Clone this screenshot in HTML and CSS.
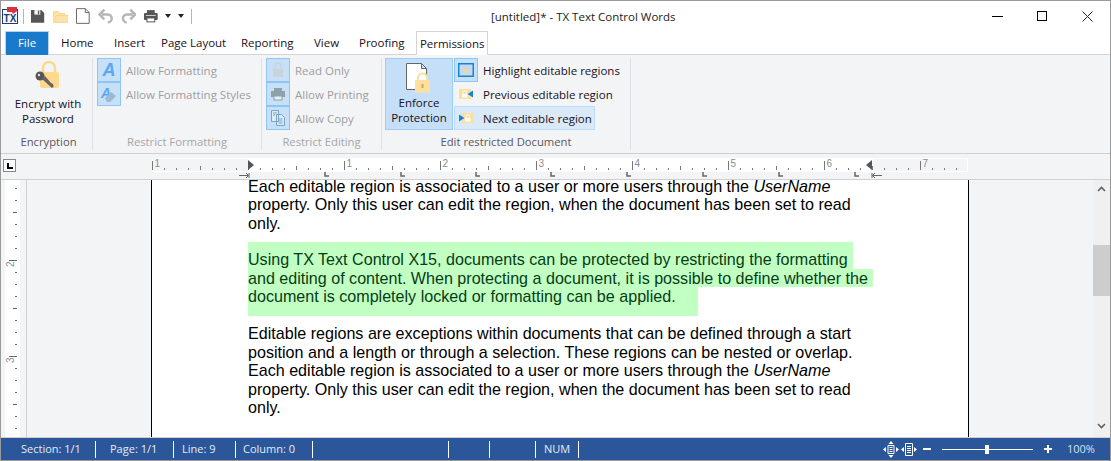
FILE: index.html
```html
<!DOCTYPE html>
<html lang="en">
<head>
<meta charset="utf-8">
<title>TX Text Control Words</title>
<link rel="stylesheet" href="styles.css">
</head>
<body>
<div class="app">
  <header class="titlebar">
    <svg class="logo" width="16" height="17" viewBox="0 0 16 17"><rect x="0.5" y="2.5" width="15" height="14" fill="#f4f7fb" stroke="#1c3f6e"/><text x="8" y="15" class="logo-tx">TX</text><path d="M5 0h10v4l-4 3-1-2H5z" fill="#d9323c"/></svg>
    <span class="qat-sep"></span>
    <div class="qat">
      <svg width="16" height="16" viewBox="0 0 16 16"><path d="M1 2h10.500l3 3v10H1z" fill="#555"/><rect x="4.500" y="2" width="6" height="4.500" fill="#fff"/><rect x="8" y="2.500" width="1.500" height="3.500" fill="#555"/></svg>
      <svg width="16" height="16" viewBox="0 0 16 16"><path d="M.5 3.500h5l1.500 2h5v2h-8l-3 6z" fill="#fde3aa" stroke="#f6d48e"/><path d="M.5 14.500l3-7h12v7z" fill="#fde3aa" stroke="#f6d48e"/></svg>
      <svg width="16" height="16" viewBox="0 0 16 16"><path d="M1.500.5h9l4 4v11h-13zM10.500.5v4h4" fill="#fff" stroke="#666"/></svg>
      <svg width="16" height="16" viewBox="0 0 16 16"><path d="M4 6.500h6a3.800 3.800 0 0 1 0 8M6.500 1.500l-5 5 5 5" fill="none" stroke="#b5b5b5" stroke-width="2.500"/></svg>
      <svg width="16" height="16" viewBox="0 0 16 16"><path d="M12 6.500H6a3.800 3.800 0 0 0 0 8M9.500 1.500l5 5-5 5" fill="none" stroke="#b5b5b5" stroke-width="2.500"/></svg>
      <svg width="16" height="16" viewBox="0 0 16 16"><rect x="4" y="2" width="8" height="4" fill="#555"/><rect x="1" y="5" width="14" height="7" rx="1" fill="#555"/><rect x="4" y="10" width="8" height="4" fill="#fff" stroke="#555"/><rect x="3" y="7" width="10" height="1" fill="#ccc"/></svg>
      <span class="caret caret-a"></span>
      <span class="caret caret-b"></span>
      <span class="qat-sep qat-sep-end"></span>
    </div>
    <div class="title">[untitled]* - TX Text Control Words</div>
    <div class="winctl">
      <svg width="11" height="11" viewBox="0 0 11 11"><path d="M0 5.500h11" stroke="#000"/></svg>
      <svg width="11" height="11" viewBox="0 0 11 11"><rect x=".5" y=".5" width="9" height="9" fill="none" stroke="#000"/></svg>
      <svg width="11" height="11" viewBox="0 0 11 11"><path d="M.5.500l10 10M10.500.500l-10 10" stroke="#222"/></svg>
    </div>
  </header>

  <nav class="tabs">
    <span class="tab file">File</span>
    <span class="tab t-home">Home</span>
    <span class="tab t-insert">Insert</span>
    <span class="tab t-page">Page Layout</span>
    <span class="tab t-rep">Reporting</span>
    <span class="tab t-view">View</span>
    <span class="tab t-proof">Proofing</span>
    <span class="tab active">Permissions</span>
  </nav>

  <section class="ribbon">
    <div class="group g-enc">
      <div class="group-body center">
        <svg class="big-key" width="28" height="30" viewBox="0 0 28 30"><path d="M9 11V7a6 6 0 0 1 12 0v4" fill="none" stroke="#fbd98f" stroke-width="2.500"/><rect x="6" y="11" width="19" height="16" rx="2" fill="#fdd98d"/><circle cx="6" cy="15" r="4.500" fill="#555"/><circle cx="5" cy="14" r="1.200" fill="#ddd"/><path d="M8 18l10 9 2-2-1-1 0-1-2-1-6-7z" fill="#666"/></svg>
        <div class="big-label dark">Encrypt with<br>Password</div>
      </div>
      <div class="group-label">Encryption</div>
    </div>

    <div class="group g-fmt">
      <div class="group-body rows">
        <div class="row off"><span class="sq"><span class="glyph-a">A</span></span>Allow Formatting</div>
        <div class="row off"><span class="sq"><svg width="20" height="20" viewBox="0 0 20 20"><text x="2" y="14" class="svg-a">A</text><path d="M6 14l6-6 5 4-6 6H8z" fill="#9cb8d2"/></svg></span>Allow Formatting Styles</div>
      </div>
      <div class="group-label off-label">Restrict Formatting</div>
    </div>

    <div class="group g-edit">
      <div class="group-body rows">
        <div class="row off"><span class="sq"><svg width="18" height="18" viewBox="0 0 18 18"><path d="M6 8V5a3 3 0 0 1 6 0v3" fill="none" stroke="#c9d3d9" stroke-width="1.500"/><rect x="4" y="8" width="10" height="8" fill="#c9d3d9"/></svg></span>Read Only</div>
        <div class="row off"><span class="sq"><svg width="18" height="18" viewBox="0 0 18 18"><rect x="5" y="3" width="8" height="3" fill="#8fa0ad"/><rect x="2" y="6" width="14" height="6" fill="#8fa0ad"/><rect x="5" y="11" width="8" height="4" fill="#e6eef5" stroke="#8fa0ad"/></svg></span>Allow Printing</div>
        <div class="row off"><span class="sq"><svg width="18" height="18" viewBox="0 0 18 18"><path d="M2.500 1.500h7v11h-7zM7.500 5.500h5l3 3v8h-8z" fill="#dcebf8" stroke="#7da3c4"/><path d="M4 4h4M4 6h2M9.500 10h4M9.500 12h4M9.500 14h4" stroke="#7da3c4"/></svg></span>Allow Copy</div>
      </div>
      <div class="group-label off-label">Restrict Editing</div>
    </div>

    <div class="group g-doc">
      <div class="group-body doc-body">
        <div class="enforce">
          <svg width="30" height="30" viewBox="0 0 30 30"><path d="M2.500.5h15l5 5v21h-20zM17.500.5v5h5" fill="#fff" stroke="#666"/><path d="M14 18v-3a4.500 4.500 0 0 1 9 0v3" fill="none" stroke="#fddf9e" stroke-width="2"/><rect x="11" y="17" width="15" height="12.500" rx="1" fill="#fddf9e"/><rect x="17.500" y="21" width="2" height="4" fill="#c9a868"/></svg>
          <div class="big-label">Enforce<br>Protection</div>
        </div>
        <div class="rows">
          <div class="row"><span class="sq sq-on"><svg width="16" height="14" viewBox="0 0 16 14"><rect x=".75" y=".75" width="14.500" height="12.500" fill="#c2daef" stroke="#1784dc" stroke-width="1.500"/><path d="M6 6V4.500a2 2 0 0 1 4 0V6" fill="none" stroke="#d6d6c8"/><rect x="4.500" y="6" width="7" height="5.500" fill="#dcd8c2"/></svg></span>Highlight editable regions</div>
          <div class="row"><span class="sq sq-none"><svg width="16" height="12" viewBox="0 0 16 12"><rect x="1" y="1" width="12" height="10" fill="#fddf9e"/><path d="M5 6V4.500a1.800 1.800 0 0 1 3.600 0V6" fill="none" stroke="#fff"/><rect x="4" y="6" width="5.500" height="3.500" fill="#fff"/><path d="M9.500 6l5.500-3.500v7z" fill="#1784dc"/></svg></span>Previous editable region</div>
          <div class="row hover"><span class="sq sq-none"><svg width="16" height="12" viewBox="0 0 16 12"><rect x="3" y="1" width="12" height="10" fill="#fddf9e"/><path d="M8 6V4.500a1.800 1.800 0 0 1 3.600 0V6" fill="none" stroke="#fff"/><rect x="7" y="6" width="5.500" height="3.500" fill="#fff"/><path d="M6.500 6L1 2.500v7z" fill="#1784dc"/></svg></span>Next editable region</div>
        </div>
      </div>
      <div class="group-label">Edit restricted Document</div>
    </div>
  </section>

  <div class="rulerband">
    <span class="tabstop"><span class="tabstop-l"></span></span>
    <svg class="hruler" width="818" height="25" viewBox="0 0 818 25">
      <defs>
        <pattern id="hticks" patternUnits="userSpaceOnUse" x="97" y="0" width="96" height="25">
          <path d="M0 7h1v9H0zM12 14h1v2h-1zM24 14h1v2h-1zM36 14h1v2h-1zM48 12h1v4h-1zM60 14h1v2h-1zM72 14h1v2h-1zM84 14h1v2h-1z" fill="#777"/>
        </pattern>
      </defs>
      <rect x="1" y="4" width="816" height="14" fill="#fff"/>
      <rect x="1.500" y="4.500" width="96" height="13" fill="#f3f4f6" stroke="#fff"/>
      <rect x="721.500" y="4.500" width="95" height="13" fill="#f3f4f6" stroke="#fff"/>
      <rect x="1" y="4" width="816" height="14" fill="url(#hticks)"/>
      <g class="rnum">
        <text x="3.500" y="12.500">1</text><text x="195.500" y="12.500">1</text><text x="291.500" y="12.500">2</text><text x="387.500" y="12.500">3</text><text x="483.500" y="12.500">4</text><text x="579.500" y="12.500">5</text><text x="675.500" y="12.500">6</text><text x="771.500" y="12.500">7</text>
      </g>
      <path d="M97 6l6 5-6 5zM721 6l-6 5 6 5z" fill="#555"/>
      <path d="M88 21.500h9M95 19l2.500 2.500-2.500 2.500M98 19v5M721 19v5M731 21.500h-9M724 19l-2.500 2.500 2.500 2.500" fill="none" stroke="#666"/>
      <path d="M174 18v4h4M250 18v4h4M325 18v4h4M400 18v4h4M476 18v4h4M552 18v4h4M628 18v4h4M704 18v4h4" fill="none" stroke="#666" stroke-width="1.500"/>
    </svg>
  </div>

  <main class="workspace">
    <div class="vruler">
      <svg width="15" height="257" viewBox="0 0 15 257">
        <defs>
          <pattern id="vticks" patternUnits="userSpaceOnUse" x="0" y="-16" width="15" height="96">
            <path d="M4 96h8v1H4zM10 12h2v1h-2zM10 24h2v1h-2zM10 36h2v1h-2zM8 48h4v1H8zM10 60h2v1h-2zM10 72h2v1h-2zM10 84h2v1h-2zM4 0h8v1H4z" fill="#666"/>
          </pattern>
        </defs>
        <rect width="15" height="257" fill="#fff"/>
        <rect width="15" height="257" fill="url(#vticks)"/>
        <text class="rnum" transform="translate(9 87) rotate(-90)">2</text>
        <text class="rnum" transform="translate(9 183) rotate(-90)">3</text>
      </svg>
    </div>
    <div class="canvas">
      <article class="page">
        <div class="para">
          <div>Each editable region is associated to a user or more users through the <i>UserName</i></div>
          <div>property. Only this user can edit the region, when the document has been set to read</div>
          <div>only.</div>
        </div>
        <div class="para hl">
          <div class="hl-1">Using TX Text Control X15, documents can be protected by restricting the formatting</div>
          <div class="hl-2">and editing of content. When protecting a document, it is possible to define whether the</div>
          <div class="hl-3">document is completely locked or formatting can be applied.</div>
        </div>
        <div class="para p3">
          <div>Editable regions are exceptions within documents that can be defined through a start</div>
          <div>position and a length or through a selection. These regions can be nested or overlap.</div>
          <div>Each editable region is associated to a user or more users through the <i>UserName</i></div>
          <div>property. Only this user can edit the region, when the document has been set to read</div>
          <div>only.</div>
        </div>
      </article>
    </div>
    <div class="scrollbar">
      <svg width="9" height="6" viewBox="0 0 9 6"><path d="M1 5l3.500-3.500L8 5" fill="none" stroke="#606060" stroke-width="1.600"/></svg>
      <span class="thumb"></span>
      <svg class="sb-down" width="9" height="6" viewBox="0 0 9 6"><path d="M1 1l3.500 3.500L8 1" fill="none" stroke="#606060" stroke-width="1.600"/></svg>
    </div>
  </main>

  <footer class="status">
    <span class="cell c1">Section: 1/1</span>
    <span class="cell c2">Page: 1/1</span>
    <span class="cell c3">Line: 9</span>
    <span class="cell c4">Column: 0</span>
    <span class="cell c5"></span>
    <span class="cell c6"></span>
    <span class="cell c7">&nbsp;</span>
    <span class="cell c8">NUM</span>
    <div class="zoombox">
      <svg width="16" height="17" viewBox="0 0 16 17"><path d="M5 4.500h6v8H5zM6.500 6.500h3M6.500 8.500h3M6.500 10.500h3" fill="none" stroke="#fff"/><path d="M8 0l2.500 3h-5zM8 17l-2.500-3h5zM0 8.500L3 6v5zM16 8.500L13 6v5z" fill="#fff"/></svg>
      <svg width="16" height="17" viewBox="0 0 16 17"><path d="M4.500 2.500h7v12h-7zM6 5.500h4M6 7.500h4M6 9.500h4M6 11.500h4" fill="none" stroke="#fff"/><path d="M0 8.500L3 6v5zM16 8.500L13 6v5z" fill="#fff"/></svg>
      <span class="minus"></span>
      <span class="slider"><span class="knob"></span></span>
      <span class="plus"></span>
      <span class="pct">100%</span>
    </div>
  </footer>
</div>
</body>
</html>
```
FILE: styles.css
```css
* { box-sizing: border-box; }
html, body { margin: 0; padding: 0; }
body { width: 1111px; height: 461px; overflow: hidden; background: #fff; font-family: "Open Sans", "Noto Sans", sans-serif; font-size: 11.5px; color: #1a1020; }
.app { width: 1111px; height: 461px; border: 1px solid #9a9a9a; display: flex; flex-direction: column; background: #fff; }

/* title bar */
.titlebar { height: 30px; flex: none; display: flex; align-items: center; padding-left: 1px; }
.logo { flex: none; margin-top: -1px; }
.logo-tx { font: bold 10px "Liberation Sans", sans-serif; fill: #1c3f6e; text-anchor: middle; }
.qat-sep { width: 1px; height: 15px; background: #b5b5b5; margin-left: 5px; margin-top: 1px; flex: none; }
.qat { display: flex; align-items: center; gap: 7px; margin-left: 6px; position: relative; width: 162px; flex: none; }
.caret { width: 0; height: 0; border: 3px solid transparent; border-top: 4px solid #222; border-bottom: 0; flex: none; }
.caret-a { margin-left: -1px; }
.caret-b { margin-left: 0; }
.qat-sep-end { margin-left: 0; }
.title { margin-left: 299px; width: 200px; white-space: nowrap; color: #222; font-size: 11.5px; flex: none; }
.winctl { margin-left: auto; display: flex; gap: 34px; padding-right: 17px; }

/* tabs */
.tabs { height: 24px; flex: none; display: grid; grid-template-columns: 44px 53px 47px 80px 73px 45px 69px 72px; padding-left: 4px; border-bottom: 1px solid #d4d4d4; }
.tab { padding-left: 12px; line-height: 23px; white-space: nowrap; }
.tab.file { background: #1979ca; color: #fff; border: 1px solid #b7d4ec; border-bottom: 0; padding: 0; text-align: center; line-height: 21px; }
.tab.active { padding-left: 3px; border: 1px solid #d4d4d4; border-bottom: 0; background: #fff; height: 24px; letter-spacing: -.05px; }

/* ribbon */
.ribbon { height: 99px; flex: none; display: flex; background: #f3f4f6; border-bottom: 1px solid #d0d0d0; }
.group { display: flex; flex-direction: column; margin-top: 3px; height: 92px; border-right: 1px solid #dfe1e4; flex: none; }
.g-enc { width: 92px; padding-left: 3px; }
.g-fmt { width: 169px; padding-left: 4px; }
.g-edit { width: 120px; padding-left: 4px; }
.g-doc { width: 249px; padding-left: 3px; }
.group-body { height: 72px; flex: none; }
.group-label { margin-top: auto; height: 20px; text-align: center; color: #5c5560; line-height: 23px; white-space: nowrap; font-size: 11.25px; }
.g-enc .group-label { margin-left: 1px; }
.g-fmt .group-label, .g-edit .group-label { margin-left: -4px; }
.g-doc .group-label { margin-left: -3px; }
.off-label { color: #a6a6a6; }
.center { display: flex; flex-direction: column; align-items: center; }
.big-key { margin-top: 3px; flex: none; }
.big-label { line-height: 15px; text-align: center; white-space: nowrap; }
.dark { margin-top: 5px; color: #1a1020; }
.rows { display: flex; flex-direction: column; }
.row { height: 24px; display: flex; align-items: center; gap: 5px; white-space: nowrap; }
.row.off { color: #9e9e9e; }
.row.hover { background: #d9e9f8; box-shadow: inset 0 0 0 1px #bcdcfb; width: 141px; }
.sq { width: 24px; height: 24px; flex: none; background: #c5e0f7; border: 1px solid #8ec5f5; display: flex; align-items: center; justify-content: center; }
.sq-on { background: #c5e0f7; }
.sq-none { background: transparent; border-color: transparent; }
.glyph-a { font: italic bold 18px "Liberation Sans", sans-serif; color: #58a9ee; }
.svg-a { font: italic bold 14px "Liberation Sans", sans-serif; fill: #58a9ee; }
.doc-body { display: flex; gap: 1px; }
.enforce { width: 68px; height: 72px; background: #c5dff8; border: 1px solid #9ccdf7; display: flex; flex-direction: column; align-items: center; padding-top: 4px; }
.enforce .big-label { margin-top: 2px; }

/* horizontal ruler band */
.rulerband { height: 26px; flex: none; display: flex; align-items: flex-start; background: #f3f4f6; border-bottom: 1px solid #d0d0d0; }
.tabstop { width: 13px; height: 13px; margin: 5px 0 0 2px; background: #fff; border: 1px solid #888; flex: none; display: flex; align-items: center; justify-content: center; }
.tabstop-l { width: 6px; height: 6px; border-left: 2px solid #000; border-bottom: 2px solid #000; }
.hruler { margin-left: 135px; flex: none; display: block; }
.rnum { font: 10px "Liberation Sans", sans-serif; fill: #8c8c8c; }

/* workspace */
.workspace { height: 258px; flex: none; display: flex; background: #f3f4f6; border-bottom: 1px solid #d0d0d0; overflow: hidden; }
.vruler { width: 25px; flex: none; padding-left: 4px; }
.vruler svg { display: block; }
.canvas { width: 1067px; flex: none; border-left: 1px solid #d0d0d0; padding-left: 124px; }
.page { width: 818px; height: 257px; background: #fff; border-left: 1px solid #000; border-right: 1px solid #000; padding-left: 96px; overflow: hidden; font-family: "Liberation Sans", Arial, sans-serif; font-size: 16.1px; line-height: 18.4px; color: #000; white-space: nowrap; }
.para { display: flex; flex-direction: column; align-items: flex-start; }
.para:first-child { margin-top: -3px; }
.hl { margin-top: 10px; color: #063d14; }
.hl > div { background: #c2ffc2; padding-right: 5px; }
.hl-1 { padding-top: 8px; }
.hl > .hl-3 { padding-right: 22px; padding-bottom: 11px; }
.p3 { margin-top: 8px; }
.scrollbar { width: 17px; flex: none; background: #f0f0f0; display: flex; flex-direction: column; align-items: center; padding-top: 6px; }
.scrollbar svg { flex: none; }
.thumb { width: 17px; height: 51px; background: #cdcdcd; margin-top: 53px; flex: none; }
.sb-down { margin-top: 127px; }

/* status bar */
.status { height: 22px; flex: none; display: flex; background: #2b579a; color: #e4ecf6; font-size: 11px; align-items: stretch; }
.cell { position: relative; display: flex; align-items: center; white-space: nowrap; padding-left: 9px; padding-bottom: 1px; flex: none; }
.cell::after { content: ""; position: absolute; right: 0; top: 3px; bottom: 2px; width: 1px; background: #fff; }
.c1 { width: 95px; padding-left: 20px; }
.c2 { width: 78px; padding-left: 14px; }
.c3 { width: 62px; padding-left: 8px; }
.c4 { width: 77px; padding-left: 7px; }
.c5 { width: 136px; }
.c6 { width: 41px; }
.c7 { width: 46px; }
.c8 { width: 43px; padding-left: 8px; }
.zoombox { margin-left: auto; display: flex; align-items: center; padding-right: 17px; }
.zoombox svg { flex: none; }
.zoombox svg + svg { margin-left: 2px; }
.minus { width: 8px; height: 2px; background: #fff; margin-left: 6px; flex: none; }
.slider { width: 91px; height: 1px; background: #fff; margin-left: 11px; position: relative; flex: none; }
.knob { position: absolute; left: 43px; top: -4px; width: 4px; height: 9px; background: #fff; }
.plus { width: 8px; height: 8px; margin-left: 11px; flex: none; background: linear-gradient(#fff, #fff) center / 8px 2px no-repeat, linear-gradient(#fff, #fff) center / 2px 8px no-repeat; }
.pct { margin-left: 15px; width: 26px; white-space: nowrap; color: #cfe0f2; padding-bottom: 1px; }
```
